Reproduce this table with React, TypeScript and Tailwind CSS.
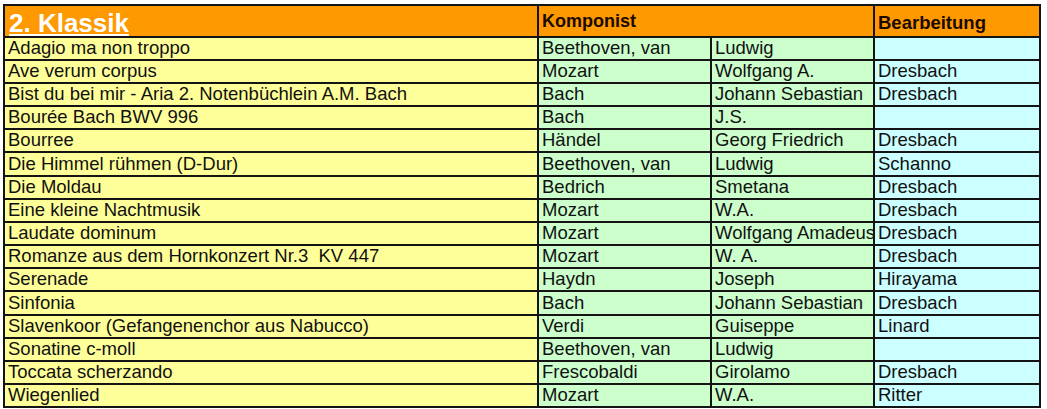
import React from "react";

const rows: [string, string, string, string][] = [
  ["Adagio ma non troppo", "Beethoven, van", "Ludwig", ""],
  ["Ave verum corpus", "Mozart", "Wolfgang A.", "Dresbach"],
  ["Bist du bei mir - Aria 2. Notenbüchlein A.M. Bach", "Bach", "Johann Sebastian", "Dresbach"],
  ["Bourée Bach BWV 996", "Bach", "J.S.", ""],
  ["Bourree", "Händel", "Georg Friedrich", "Dresbach"],
  ["Die Himmel rühmen (D-Dur)", "Beethoven, van", "Ludwig", "Schanno"],
  ["Die Moldau", "Bedrich", "Smetana", "Dresbach"],
  ["Eine kleine Nachtmusik", "Mozart", "W.A.", "Dresbach"],
  ["Laudate dominum", "Mozart", "Wolfgang Amadeus", "Dresbach"],
  ["Romanze aus dem Hornkonzert Nr.3  KV 447", "Mozart", "W. A.", "Dresbach"],
  ["Serenade", "Haydn", "Joseph", "Hirayama"],
  ["Sinfonia", "Bach", "Johann Sebastian", "Dresbach"],
  ["Slavenkoor (Gefangenenchor aus Nabucco)", "Verdi", "Guiseppe", "Linard"],
  ["Sonatine c-moll", "Beethoven, van", "Ludwig", ""],
  ["Toccata scherzando", "Frescobaldi", "Girolamo", "Dresbach"],
  ["Wiegenlied", "Mozart", "W.A.", "Ritter"],
];

const font = { fontFamily: '"Liberation Sans", Arial, sans-serif' };

const cell =
  "border-2 border-[#141414] px-[3px] py-0 text-[18.5px] leading-none text-[#111] whitespace-pre overflow-hidden align-middle";

export default function App() {
  return (
    <div className="w-[1047px] h-[409px] bg-white pl-[3px] pt-[4px]" style={font}>
      <table className="border-collapse table-fixed w-[1036px] border-2 border-[#141414]">
        <colgroup>
          <col className="w-[534px]" />
          <col className="w-[173px]" />
          <col className="w-[163px]" />
          <col className="w-[166px]" />
        </colgroup>
        <thead>
          <tr className="h-[30px] bg-[#ff9900]">
            <td className="border-2 border-[#141414] px-[4px] py-0 align-bottom">
              <div className="text-white font-bold text-[26px] underline underline-offset-2 leading-[26px] h-[26px]">2. Klassik</div>
            </td>
            <td colSpan={2} className="border-2 border-[#141414] px-[3px] py-0 align-top pt-[4px]">
              <span className="text-[#1a0a00] font-bold text-[18px] leading-none">Komponist</span>
            </td>
            <td className="border-2 border-[#141414] px-[3px] py-0 align-top pt-[6px]">
              <span className="text-[#1a0a00] font-bold text-[18.5px] leading-none">Bearbeitung</span>
            </td>
          </tr>
        </thead>
        <tbody>
          {rows.map((r, i) => (
            <tr key={i} className={i === 5 || i === 11 ? "h-[24px]" : "h-[23px]"}>
              <td className={`${cell} bg-[#ffff99]`}>{r[0]}</td>
              <td className={`${cell} bg-[#ccffcc]`}>{r[1]}</td>
              <td className={`${cell} bg-[#ccffcc]`}>{r[2]}</td>
              <td className={`${cell} bg-[#ccffff]`}>{r[3]}</td>
            </tr>
          ))}
        </tbody>
      </table>
    </div>
  );
}
